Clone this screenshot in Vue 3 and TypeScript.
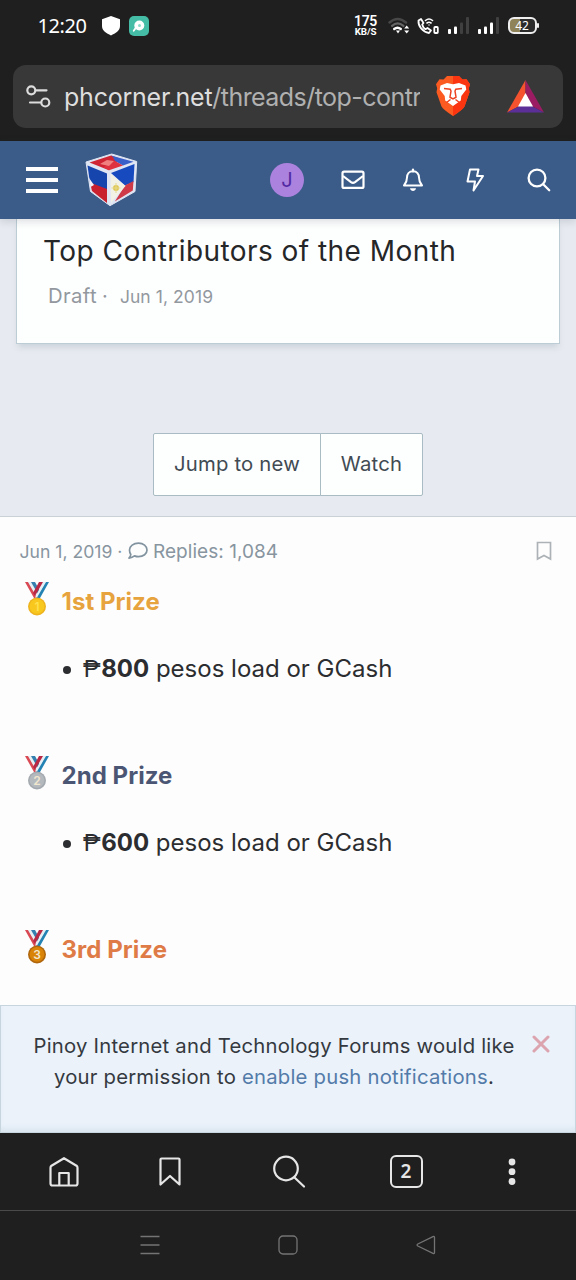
<script setup lang="ts">
interface Prize {
  rank: number
  label: string
  amount: string
  tone: string
  medal: string
  rim: string
}

const prizes: Prize[] = [
  { rank: 1, label: '1st Prize', amount: '800', tone: 'gold', medal: '#f9c81e', rim: '#eeb41f' },
  { rank: 2, label: '2nd Prize', amount: '600', tone: 'silver', medal: '#b4b9be', rim: '#a3a9ae' },
  { rank: 3, label: '3rd Prize', amount: '', tone: 'bronze', medal: '#d98408', rim: '#b0660c' },
]
</script>

<template>
  <div class="screen">
    <div class="status">
      <span class="time">12:20</span>
      <svg class="shield" width="20" height="20" viewBox="0 0 20 20"><path d="M10 0 19 3.200V10c0 5-4.500 7-9 9.500C5.500 17 1 15 1 10V3.200z" fill="#fff" /></svg>
      <svg class="app" width="20" height="20" viewBox="0 0 20 20">
        <rect width="20" height="20" rx="5" fill="#45bda6" />
        <circle cx="10.300" cy="9.500" r="5" fill="#fff" /><path d="M7 11.500 4.700 14.800" stroke="#fff" stroke-width="1.800" stroke-linecap="round" />
        <circle cx="10.500" cy="9.500" r="1.500" fill="#8fdccc" />
      </svg>
      <div class="speed"><b>175</b><small>KB/S</small></div>
      <svg class="wifi" width="22" height="18" viewBox="0 0 22 18" fill="none" stroke-linecap="round">
        <path d="M1.500 5.500Q9.500-1.500 18 5.500" stroke="#484848" stroke-width="2.400" />
        <path d="M4 8.800Q9.500 4 15.500 8.800" stroke="#666" stroke-width="2.200" />
        <path d="M6.200 12Q9.500 9.300 12.800 12" stroke="#fff" stroke-width="2.400" />
        <path d="M8 13.500h4L10 16.500z" fill="#fff" />
        <path d="m16.200 11.500 2.500-3 2.500 3zM16.200 13.500l2.500 3 2.500-3z" fill="#fff" />
      </svg>
      <svg class="call" width="22" height="18" viewBox="0 0 22 18" fill="none" stroke="#fff" stroke-width="1.800" stroke-linecap="round" stroke-linejoin="round">
        <path d="M4 2 1.500 3.500C1 9 5.500 15 12 16l2-2.500-3.500-2.500-2 1.200C6.500 11 5.500 9 5.200 7.500L6.500 6z" />
        <path d="M8.500 3.500q3.500-3 7 0M10 6q2-1.500 4 0" stroke-width="1.600" /><circle cx="12" cy="8" r=".7" fill="#fff" stroke="none" />
        <rect x="17.300" y="10" width="3.500" height="6" rx=".8" />
      </svg>
      <svg class="signal" width="22" height="18" viewBox="0 0 22 18">
        <rect x="0" y="12" width="3" height="5" rx="1" fill="#fff" /><rect x="6" y="9.500" width="3" height="7.500" rx="1" fill="#fff" />
        <rect x="12" y="5.500" width="3" height="11.500" rx="1" fill="#404040" /><rect x="18" y="0" width="3" height="17" rx="1" fill="#404040" />
      </svg>
      <svg class="signal second" width="22" height="18" viewBox="0 0 22 18">
        <rect x="0" y="12" width="3" height="5" rx="1" fill="#fff" /><rect x="6" y="9.500" width="3" height="7.500" rx="1" fill="#fff" />
        <rect x="12" y="5.500" width="3" height="11.500" rx="1" fill="#fff" /><rect x="18" y="0" width="3" height="17" rx="1" fill="#404040" />
      </svg>
      <div class="battery"><span>42</span></div>
    </div>

    <div class="omnibox">
      <svg class="tune" width="26" height="24" viewBox="0 0 26 24" fill="none" stroke="#dcdcdc" stroke-width="2.200" stroke-linecap="round">
        <circle cx="5.300" cy="5.300" r="4" /><path d="M10 5.300h10.500M4 17.500h10.500" /><circle cx="19.300" cy="17.500" r="4" />
      </svg>
      <div class="url"><b>phcorner.net</b>/threads/top-contr</div>
      <svg class="brave" width="36" height="42" viewBox="0 0 36 42">
        <path d="M12 1h12l3.500 3.500 4-.2 3.500 5-1.200 4 .7 4-5 14.200Q28 34.500 18 41 8 34.500 6.500 31.500l-5-14.200.7-4L1 9.300l3.500-5 4 .2z" fill="#fb5a20" />
        <path d="M18 1h6l3.500 3.500 4-.2 3.500 5-1.200 4 .7 4-5 14.200Q28 34.500 18 41z" fill="#fa3510" />
        <path d="M5.500 10.500 12 8l6 1.300L24 8l6.500 2.500.8 4-5 6.500-.5 4.500L18 31l-7.800-5.500-.5-4.500-5-6.500z" fill="#fff" />
        <path d="m9 13.500 6.200.8.8 1.700-1 6M27 13.500l-6.200.8-.8 1.700 1 6M14.500 22l3.500 2 3.500-2M11.500 27.500l4-3M24.500 27.500l-4-3" fill="none" stroke="#ed4220" stroke-width="1.500" />
      </svg>
      <svg class="bat" width="37" height="33" viewBox="0 0 37 33">
        <path d="M18.500 0 0 32.500 12.500 26l6-11z" fill="#f5522f" /><path d="M18.500 0 37 32.500 24.500 26l-6-11z" fill="#9c1c63" /><path d="M0 32.500h37L24.500 26h-12z" fill="#5b2f97" /><path d="m18.500 13 7.500 13.500H11z" fill="#fff" />
      </svg>
    </div>

    <header class="nav">
      <div class="burger"><i /><i /><i /></div>
      <svg class="cube" width="54" height="54" viewBox="0 0 54 54">
        <path d="M26.700 1 51.700 8.500 50 38.500 25 52.700 5.500 38.500 1 9z" fill="#dfe5f3" stroke="#dfe5f3" stroke-linejoin="round" />
        <path d="m26 2.500 9 3-11 11.800L4.500 9.500z" fill="#cf2433" /><path d="m26 2.500 22.500 6.300-10.500 3.700-8-4.500-2-4z" fill="#3a5fc9" /><path d="m30 8 8 4.500-14 4.800-6-3z" fill="#df3240" /><path d="m22 7 7 1-5 5-9-2z" fill="#f07f7f" />
        <path d="m2.500 12.500 19.500 8v17L5 30z" fill="#1545ad" /><path d="m5 29.500 17 6.500v14L7 38z" fill="#c9202f" /><path d="m4 25 5 7-3.500 2z" fill="#f3f3f8" />
        <path d="m26 20 23.500-9-1 18-8.500 3.500z" fill="#174abf" /><path d="m40 32.500 8.500-4.500-.7 9.500-18 11z" fill="#cf3a48" /><path d="m25.500 20.500 15 12.500L26 50z" fill="#f2f1e6" />
        <circle cx="31" cy="35" r="3" fill="#dfc650" /><path d="M31 30v10M26.500 35h9" stroke="#e5d98c" />
      </svg>
      <span class="avatar">J</span>
      <svg class="mail" width="24" height="20" viewBox="0 0 24 20" fill="none" stroke="#fff" stroke-width="2.200" stroke-linejoin="round"><rect x="1.500" y="1.700" width="21" height="16.200" rx="1.500" /><path d="m2 6 8 6.200q2 1.400 4 0L22 6" /></svg>
      <svg class="bell" width="22" height="24" viewBox="0 0 22 24"><path d="M11 3.300c-4 0-6 2.800-6 6.200 0 4-1.300 6-3 8h18c-1.700-2-3-4-3-8 0-3.400-2-6.200-6-6.200z" fill="none" stroke="#fff" stroke-width="2" stroke-linejoin="round" /><path d="M11 1.500v2" stroke="#fff" stroke-width="2.200" stroke-linecap="round" /><path d="M8 20.300h6c-.5 3.700-5.500 3.700-6 0z" fill="#fff" /></svg>
      <svg class="bolt" width="18" height="24" viewBox="0 0 18 24" fill="none" stroke="#fff" stroke-width="2" stroke-linejoin="round"><path d="M4 1.500h8.500L11 8h6L7.500 22.500 9 13.500H1.500z" /></svg>
      <svg class="find" width="24" height="24" viewBox="0 0 24 24" fill="none" stroke="#fff" stroke-width="2.300" stroke-linecap="round"><circle cx="10" cy="10" r="8.400" /><path d="m16.200 16.200 6 6" /></svg>
    </header>

    <section class="hero">
      <div class="card">
        <h1>Top Contributors of the Month</h1>
        <p><span class="draft">Draft</span><span class="dot">·</span><span class="date">Jun 1, 2019</span></p>
      </div>
      <div class="actions"><button class="jump"><span>Jump to new</span></button><button class="watch"><span>Watch</span></button></div>
    </section>

    <article class="post">
      <div class="meta">
        <span class="posted">Jun 1, 2019 ·</span>
        <svg width="20" height="18" viewBox="0 0 20 18" fill="none" stroke="#8293a0" stroke-width="1.700" stroke-linejoin="round"><path d="M10.500 1.200c4.900 0 8.500 3 8.500 6.800s-3.600 6.700-8.500 6.700c-1.500 0-2.800-.3-4-.8-1.200 1-3 1.900-5.500 2.200 1-1.200 1.700-2.500 1.800-3.600C2 11.300 1.500 9.800 1.500 8c0-3.800 4-6.800 9-6.800z" /></svg>
        <span class="replies">Replies: 1,084</span>
        <svg class="save" width="16" height="20" viewBox="0 0 16 20"><path d="M1.500 1.500h13v16.500L8 14.400l-6.500 3.600z" fill="none" stroke="#adb2b7" stroke-width="1.700" /></svg>
      </div>
      <div v-for="prize in prizes" :key="prize.rank" class="prize">
        <h2 :class="prize.tone">
          <svg width="26" height="34" viewBox="0 0 26 34">
            <path d="m1 0 9 16h4L4.500 0z" fill="#d94a54" /><path d="m4 0 8.500 15h2.500L7 0z" fill="#e7f0f5" /><path d="m7 0 8 14 2-3-6-11z" fill="#3580ae" />
            <path d="m25 0-9 16h-4L21.500 0z" fill="#2583b4" /><path d="m22 0-9 15.500h-2L19 0z" fill="#e7f0f5" /><path d="m19 0-8 14-2-3 6-11z" fill="#b92945" />
            <circle cx="13" cy="24.500" r="9" :fill="prize.rim" /><circle cx="13" cy="24.300" r="7.400" :fill="prize.medal" />
            <text x="13" y="28.700" text-anchor="middle" font-size="12" font-weight="600" :fill="prize.rank === 1 ? '#ffe04f' : '#f1e6ce'">{{ prize.rank }}</text>
          </svg>
          <span>{{ prize.label }}</span>
        </h2>
        <ul v-if="prize.amount"><li><b><span class="peso">₱</span>{{ prize.amount }}</b> pesos load or GCash</li></ul>
      </div>
    </article>

    <aside class="notice">
      <p>Pinoy Internet and Technology Forums would like<br>your permission to <a>enable push notifications</a>.</p>
      <svg width="18" height="18" viewBox="0 0 18 18"><path d="m2 2 14 14M16 2 2 16" stroke="#dba4ae" stroke-width="3" stroke-linecap="round" /></svg>
    </aside>

    <nav class="toolbar">
      <svg width="32" height="32" viewBox="0 0 32 32"><path d="M3.500 9.700 16 2.200l12.500 7.500q1 .8 1 2V27.500q0 2-2 2h-23q-2 0-2-2V11.700q0-1.200 1-2zM11.300 29V17h9.400V29" /></svg>
      <svg width="24" height="30" viewBox="0 0 24 30"><path d="M3.500 1.500h17q1 0 1 1V27.500L12 19l-9.500 8.500V2.500q0-1 1-1z" /></svg>
      <svg width="34" height="34" viewBox="0 0 34 34"><circle cx="14" cy="13.500" r="11.800" /><path d="m22.500 22.500 9.500 9" /></svg>
      <span class="tabs">2</span>
      <svg class="more" width="8" height="28" viewBox="0 0 8 28"><circle cx="4" cy="4" r="3.400" /><circle cx="4" cy="13.700" r="3.400" /><circle cx="4" cy="23.500" r="3.400" /></svg>
    </nav>
    <div class="system">
      <svg width="20" height="20" viewBox="0 0 20 20"><path d="M.5 1.500h19M.5 10h19M.5 18.500h19" /></svg>
      <svg width="20" height="20" viewBox="0 0 20 20"><rect x="1" y="1" width="18" height="18" rx="4" /></svg>
      <svg width="20" height="20" viewBox="0 0 20 20"><path d="M18.500 2.500v15q0 1.500-1.500.8L1.800 11q-1.500-1 0-2L17 1.700q1.500-.7 1.500.8z" /></svg>
    </div>
  </div>
</template>

<style>
body { margin: 0; background: #1f1f1f; }
</style>

<style scoped>
* { box-sizing: border-box; }
.screen { width: 576px; height: 1280px; overflow: hidden; background: #1f1f1f; font-family: Inter, sans-serif; display: flex; flex-direction: column; white-space: nowrap; }
.screen > * { flex: none; }
svg { display: block; flex: none; }
h1, h2, p, ul { margin: 0; padding: 0; font-weight: 400; }

.status { height: 65px; padding: 16px 0 0 37.500px; display: flex; align-items: flex-start; color: #fff; }
.time { width: 63px; font: 20px/19px "Noto Sans", sans-serif; letter-spacing: -.4px; }
.app { margin-left: 8px; }
.speed { width: 26px; height: 20px; margin-left: 204px; display: flex; flex-direction: column; align-items: center; font-family: Roboto, sans-serif; }
.speed b { font-size: 14px; line-height: 10px; font-weight: 600; letter-spacing: -.3px; }
.speed small { font-size: 9.800px; line-height: 11px; font-weight: 700; letter-spacing: -.1px; }
.wifi { margin: 1px 0 0 9px; }
.call { margin: 1px 0 0 7px; }
.signal { margin: 1px 0 0 9px; }
.signal.second { margin-left: 8px; }
.battery { position: relative; width: 29px; height: 17px; margin: 1px 0 0 8px; border: 2px solid #eee; border-radius: 6px; background: linear-gradient(90deg, #8f8359 42%, #2b2b2b 42%); font: 12px/13px "Noto Sans", sans-serif; text-align: center; }
.battery::after { content: ""; position: absolute; right: -4px; top: 4px; width: 2px; height: 5px; background: #eee; border-radius: 1px; }

.omnibox { height: 63px; margin: 0 13px 13px; border-radius: 13px; background: #383838; display: flex; align-items: center; }
.tune { margin-left: 13px; }
.url { width: 356px; margin-left: 12px; overflow: hidden; color: #b0b0b0; font: 25px/40px Inter, sans-serif; letter-spacing: -.55px; }
.url b { color: #dedede; font-weight: 400; letter-spacing: -.23px; }
.brave { margin-left: 15px; margin-top: -1px; }
.bat { margin-left: 36px; }

.nav { height: 78px; background: #3b5b88; display: flex; align-items: center; position: relative; z-index: 1; box-shadow: 0 2px 8px rgba(30, 40, 60, .17); }
.burger { width: 32px; margin-left: 26px; display: flex; flex-direction: column; gap: 7px; }
.burger i { height: 4px; background: #fff; }
.cube { margin-left: 27px; }
.avatar { width: 34px; height: 34px; margin-left: 131px; border-radius: 50%; background: #ab82dd; color: #5229a3; font: 20px/34px Inter, sans-serif; text-align: center; }
.mail { margin-left: 37px; }
.bell { margin-left: 37px; }
.bolt { margin-left: 42px; }
.find { margin-left: 43px; }

.hero { height: 297px; background: #e7eaf0; display: flex; flex-direction: column; align-items: center; }
.card { width: 544px; height: 125px; border: 1px solid #bccdd5; border-top: 0; background: #fdfefe; padding: 13px 0 0 26px; box-shadow: 0 5px 6px -2px rgba(120, 145, 155, .25); }
h1 { font-size: 28px; line-height: 39px; letter-spacing: .45px; color: #252628; }
.card p { display: flex; align-items: baseline; margin: 9px 0 0 5px; color: #92989e; line-height: 31px; }
.draft { font-size: 20.300px; letter-spacing: .4px; }
.dot { font-size: 20px; margin-left: 5px; }
.date { font-size: 17.500px; margin-left: 12px; letter-spacing: .08px; }
.actions { height: 63px; margin-top: 89px; display: flex; }
button { border: 1.500px solid #a9bbc3; background: #fdfefe; border-radius: 2px 0 0 2px; padding: 0 0 1px; font: 20.300px/30px Inter, sans-serif; letter-spacing: .2px; color: #414b53; white-space: nowrap; }
.jump { width: 168px; }
.watch { width: 103px; margin-left: -1px; border-radius: 0 2px 2px 0; }

.post { height: 489px; border-top: 1px solid #cbd2d7; background: #fdfdfd; }
.meta { height: 61px; padding: 7px 24px 0 19.500px; display: flex; align-items: center; color: #8895a0; font-size: 19px; }
.posted { width: 103.500px; font-size: 17.600px; }
.meta svg { margin-left: 5px; }
.replies { margin-left: 5px; letter-spacing: .04px; }
.meta .save { margin-left: auto; }
.prize { height: 174px; }
h2 { height: 46px; display: flex; align-items: center; padding: 1px 0 0 24px; font-size: 24px; font-weight: 700; letter-spacing: .05px; }
h2 svg { margin-top: -5px; }
h2 span { margin-left: 11.500px; }
.gold { color: #e7a33d; }
.silver { color: #4b5674; }
.bronze { color: #df7b46; }
ul { margin-top: 26.500px; padding-left: 83px; list-style: none; }
li { display: flow-root; position: relative; font-size: 24px; line-height: 36px; color: #2c2d30; }
li::before { content: ""; position: absolute; left: -20px; top: 15px; width: 8px; height: 8px; border-radius: 50%; background: #2c2d30; }
.peso { font-family: Roboto, sans-serif; font-weight: 400; letter-spacing: .6px; }

.notice { height: 128px; border: 1.500px solid #c6d5de; background: #ebf2fa; display: flex; align-items: flex-start; padding: 24px 0 0 31px; box-shadow: inset 0 -6px 6px -3px rgba(140, 170, 185, .2); }
.notice p { width: 484px; text-align: center; color: #343940; font-size: 20.300px; letter-spacing: .22px; line-height: 31px; }
.notice a { color: #537ba9; }
.notice svg { margin: 5px 0 0 16px; }

.toolbar { height: 78px; border-bottom: 1px solid #4a4a4a; display: flex; align-items: center; padding-left: 48px; }
.toolbar svg { fill: none; stroke: #e6e6e6; stroke-width: 2.200; stroke-linejoin: round; stroke-linecap: round; }
.toolbar svg + svg { margin-left: 77.500px; }
.toolbar svg:nth-child(3) { margin-left: 90px; }
.tabs { width: 33px; height: 33px; margin-left: 84px; border: 2px solid #e6e6e6; border-radius: 6px; color: #e6e6e6; font: 600 19px/29px "Noto Sans", sans-serif; text-align: center; }
.toolbar .more { margin-left: 85px; fill: #e6e6e6; stroke: none; }
.system { height: 68px; display: flex; align-items: center; padding-left: 140px; gap: 118px; }
.system svg { fill: none; stroke: #747474; stroke-width: 1.300; stroke-linejoin: round; }
</style>
